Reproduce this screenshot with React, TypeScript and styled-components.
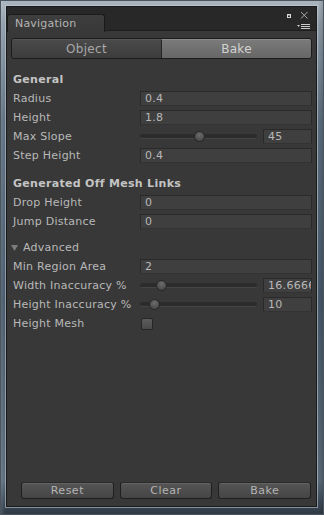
import React from "react";
import styled, { createGlobalStyle } from "styled-components";

const Global = createGlobalStyle`
  html, body { margin: 0; padding: 0; background: #3c4a57; }
  body { font-family: "DejaVu Sans", Verdana, sans-serif; }
  * { box-sizing: border-box; }
`;

const Frame = styled.div`
  width: 324px;
  height: 515px;
  display: flex;
  flex-direction: column;
  padding: 5px 7px 8px 6px;
  border: 1px solid #4a5560;
  background:
    linear-gradient(to right, rgba(255,255,255,0.12), rgba(0,0,0,0) 4px, rgba(0,0,0,0) calc(100% - 5px), rgba(0,0,0,0.15)),
    linear-gradient(to bottom, #aab5be 0px, #8e9ca8 24px, #5d6f80 120px, #47596a 300px, #5a6b7a 480px, #2e3a46 100%);
`;

const Panel = styled.div`
  flex: 1;
  display: flex;
  flex-direction: column;
  background: #383838;
  border: 1px solid #1a1a1a;
  box-shadow: 0 0 0 1px rgba(200, 210, 220, 0.55);
  margin: 0 -1px -1px -1px;
`;

const TitleBar = styled.div`
  height: 24px;
  display: flex;
  align-items: flex-start;
  background: #282828;
  border-bottom: 1px solid #1e1e1e;
`;

const Tab = styled.div`
  margin-top: 7px;
  margin-left: 0px;
  height: 18px;
  width: 98px;
  padding-left: 7px;
  display: flex;
  align-items: center;
  background: linear-gradient(to bottom, #3e3e3e, #383838);
  border: 1px solid #1b1b1b;
  border-bottom: none;
  border-radius: 3px 3px 0 0;
  color: #b4b4b4;
  font-size: 11px;
  letter-spacing: 0.2px;
  margin-bottom: -1px;
  position: relative;
  z-index: 1;
`;

const TitleIcons = styled.svg`
  margin-left: auto;
  margin-right: 4px;
  margin-top: 4px;
`;

const Content = styled.div`
  flex: 1;
  display: flex;
  flex-direction: column;
  padding: 7px 4px 7px 4px;
`;

const Toolbar = styled.div`
  display: flex;
  height: 21px;
  border: 1px solid #1c1c1c;
  border-radius: 3px;
  overflow: hidden;
  margin-bottom: 11px;
`;

const ToolButton = styled.div<{ $active?: boolean }>`
  flex: 1;
  display: flex;
  align-items: center;
  justify-content: center;
  font-size: 12px;
  letter-spacing: 0.3px;
  color: ${(p) => (p.$active ? "#d2d2d2" : "#a8a8a8")};
  background: ${(p) =>
    p.$active
      ? "linear-gradient(to bottom, #7a7a7a, #666666)"
      : "linear-gradient(to bottom, #4a4a4a, #3c3c3c)"};
  border-top: 1px solid ${(p) => (p.$active ? "#8a8a8a" : "#555555")};
  & + & {
    border-left: 1px solid #262626;
  }
`;

const Header = styled.div<{ $gap?: number }>`
  height: 19px;
  display: flex;
  align-items: center;
  padding-left: 2px;
  margin-top: ${(p) => p.$gap ?? 0}px;
  font-weight: bold;
  font-size: 11px;
  letter-spacing: 0.3px;
  color: #c4c4c4;
`;

const Row = styled.div`
  height: 19px;
  display: flex;
  align-items: center;
  padding-left: 2px;
`;

const Label = styled.div`
  width: 127px;
  flex: none;
  font-size: 11px;
  letter-spacing: 0.25px;
  color: #b8b8b8;
  white-space: nowrap;
`;

const Field = styled.div<{ $width?: number }>`
  height: 15px;
  ${(p) => (p.$width ? `width: ${p.$width}px; flex: none;` : "flex: 1;")}
  display: flex;
  align-items: center;
  padding-left: 4px;
  overflow: hidden;
  white-space: nowrap;
  background: #3f3f3f;
  border: 1px solid #2a2a2a;
  border-bottom-color: #333333;
  border-radius: 1px;
  font-size: 11px;
  letter-spacing: 0.3px;
  color: #b8b8b8;
`;

const SliderWrap = styled.div`
  flex: 1;
  display: flex;
  align-items: center;
  gap: 6px;
`;

const Track = styled.div`
  flex: 1;
  height: 15px;
  position: relative;
  &::before {
    content: "";
    position: absolute;
    left: 0;
    right: 0;
    top: 5px;
    height: 4px;
    border-radius: 2px;
    background: #2c2c2c;
    border-bottom: 1px solid #454545;
  }
`;

const Thumb = styled.div`
  position: absolute;
  top: 2px;
  width: 11px;
  height: 11px;
  margin-left: -5px;
  border-radius: 50%;
  background: radial-gradient(circle at 50% 35%, #6c6c6c, #4c4c4c 70%);
  border: 1px solid #262626;
`;

const Foldout = styled.div`
  height: 19px;
  display: flex;
  align-items: center;
  gap: 5px;
  margin-top: 7px;
  font-size: 11px;
  letter-spacing: 0.25px;
  color: #b8b8b8;
`;

const Checkbox = styled.div`
  width: 12px;
  height: 12px;
  margin-left: 1px;
  border-radius: 2px;
  border: 1px solid #262626;
  background: linear-gradient(to bottom, #5c5c5c, #4a4a4a);
`;

const Spacer = styled.div`
  flex: 1;
`;

const Footer = styled.div`
  display: flex;
  gap: 6px;
  padding-left: 10px;
  padding-right: 1px;
`;

const Button = styled.div`
  width: 93px;
  height: 17px;
  display: flex;
  align-items: center;
  justify-content: center;
  border: 1px solid #1f1f1f;
  border-radius: 3px;
  background: linear-gradient(to bottom, #555555, #454545);
  border-top-color: #2a2a2a;
  box-shadow: inset 0 1px 0 #646464;
  font-size: 11px;
  letter-spacing: 0.5px;
  color: #b4b4b4;
`;

const Slider: React.FC<{ pos: number; value: string }> = ({ pos, value }) => (
  <SliderWrap>
    <Track>
      <Thumb style={{ left: `${pos}px` }} />
    </Track>
    <Field $width={49}>{value}</Field>
  </SliderWrap>
);

export default function App() {
  return (
    <>
      <Global />
      <Frame>
        <Panel>
          <TitleBar>
            <Tab>Navigation</Tab>
            <TitleIcons width="26" height="20" viewBox="0 0 26 20">
              <rect x="1.5" y="3.5" width="3" height="3" fill="none" stroke="#d8d8d8" strokeWidth="1" />
              <rect x="1" y="3" width="4" height="1.5" fill="#d8d8d8" />
              <path d="M15 1 L21.5 7.5 M21.5 1 L15 7.5" stroke="#a8a8a8" strokeWidth="1" />
              <path d="M11 14 L14 14 L12.5 16 Z" fill="#c8c8c8" />
              <path d="M15 13.5 H24 M15 15.5 H24 M15 17.5 H24" stroke="#c8c8c8" strokeWidth="1" />
            </TitleIcons>
          </TitleBar>
          <Content>
            <Toolbar>
              <ToolButton>Object</ToolButton>
              <ToolButton $active>Bake</ToolButton>
            </Toolbar>

            <Header>General</Header>
            <Row>
              <Label>Radius</Label>
              <Field>0.4</Field>
            </Row>
            <Row>
              <Label>Height</Label>
              <Field>1.8</Field>
            </Row>
            <Row>
              <Label>Max Slope</Label>
              <Slider pos={59} value="45" />
            </Row>
            <Row>
              <Label>Step Height</Label>
              <Field>0.4</Field>
            </Row>

            <Header $gap={9}>Generated Off Mesh Links</Header>
            <Row>
              <Label>Drop Height</Label>
              <Field>0</Field>
            </Row>
            <Row>
              <Label>Jump Distance</Label>
              <Field>0</Field>
            </Row>

            <Foldout>
              <svg width="7" height="6" viewBox="0 0 7 6">
                <path d="M0 0 H7 L3.5 6 Z" fill="#7c7c7c" />
              </svg>
              Advanced
            </Foldout>
            <Row>
              <Label>Min Region Area</Label>
              <Field>2</Field>
            </Row>
            <Row>
              <Label>Width Inaccuracy %</Label>
              <Slider pos={21} value="16.6666" />
            </Row>
            <Row>
              <Label>Height Inaccuracy %</Label>
              <Slider pos={14} value="10" />
            </Row>
            <Row>
              <Label>Height Mesh</Label>
              <Checkbox />
            </Row>

            <Spacer />
            <Footer>
              <Button>Reset</Button>
              <Button>Clear</Button>
              <Button>Bake</Button>
            </Footer>
          </Content>
        </Panel>
      </Frame>
    </>
  );
}
